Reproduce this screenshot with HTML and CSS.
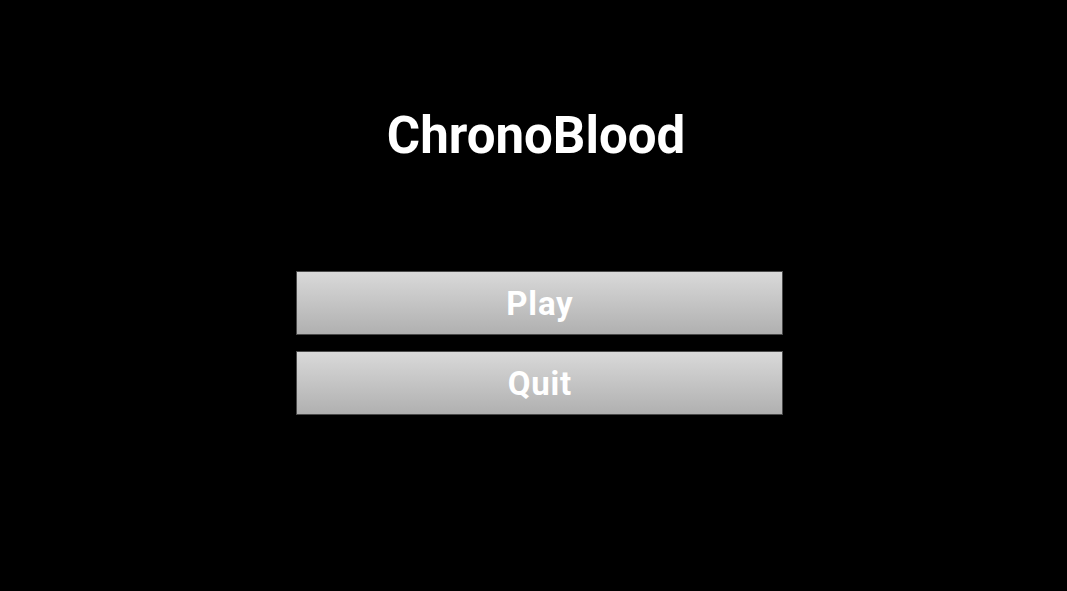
FILE: index.html
```html
<!DOCTYPE html>
<html>
<head>
<meta charset="utf-8">
<link rel="stylesheet" href="styles.css">
</head>
<body>
<div class="screen">
  <h1 class="title">ChronoBlood</h1>
  <div class="menu">
    <button class="btn">Play</button>
    <button class="btn">Quit</button>
  </div>
</div>
</body>
</html>
```
FILE: styles.css
```css
html, body {
  margin: 0;
  padding: 0;
  background: #000;
  width: 1067px;
  height: 591px;
  overflow: hidden;
}
.screen {
  display: flex;
  flex-direction: column;
  font-family: Roboto, "Liberation Sans", sans-serif;
}
.title {
  margin: 104px 0 0 0;
  padding-left: 5px;
  text-align: center;
  color: #fff;
  font-size: 51px;
  font-weight: 700;
  line-height: 64px;
}
.menu {
  margin: 103px 0 0 296px;
  width: 487px;
  display: flex;
  flex-direction: column;
  gap: 16px;
}
.btn {
  box-sizing: border-box;
  height: 64px;
  border: 1px solid #4a4a4a;
  background: linear-gradient(#d9d9d9, #b0b0b0);
  color: #fff;
  font-family: Roboto, "Liberation Sans", sans-serif;
  font-size: 33px;
  font-weight: 700;
  letter-spacing: 0.8px;
  text-indent: 0.8px;
  padding: 0;
  margin: 0;
  line-height: 55px;
}
```
